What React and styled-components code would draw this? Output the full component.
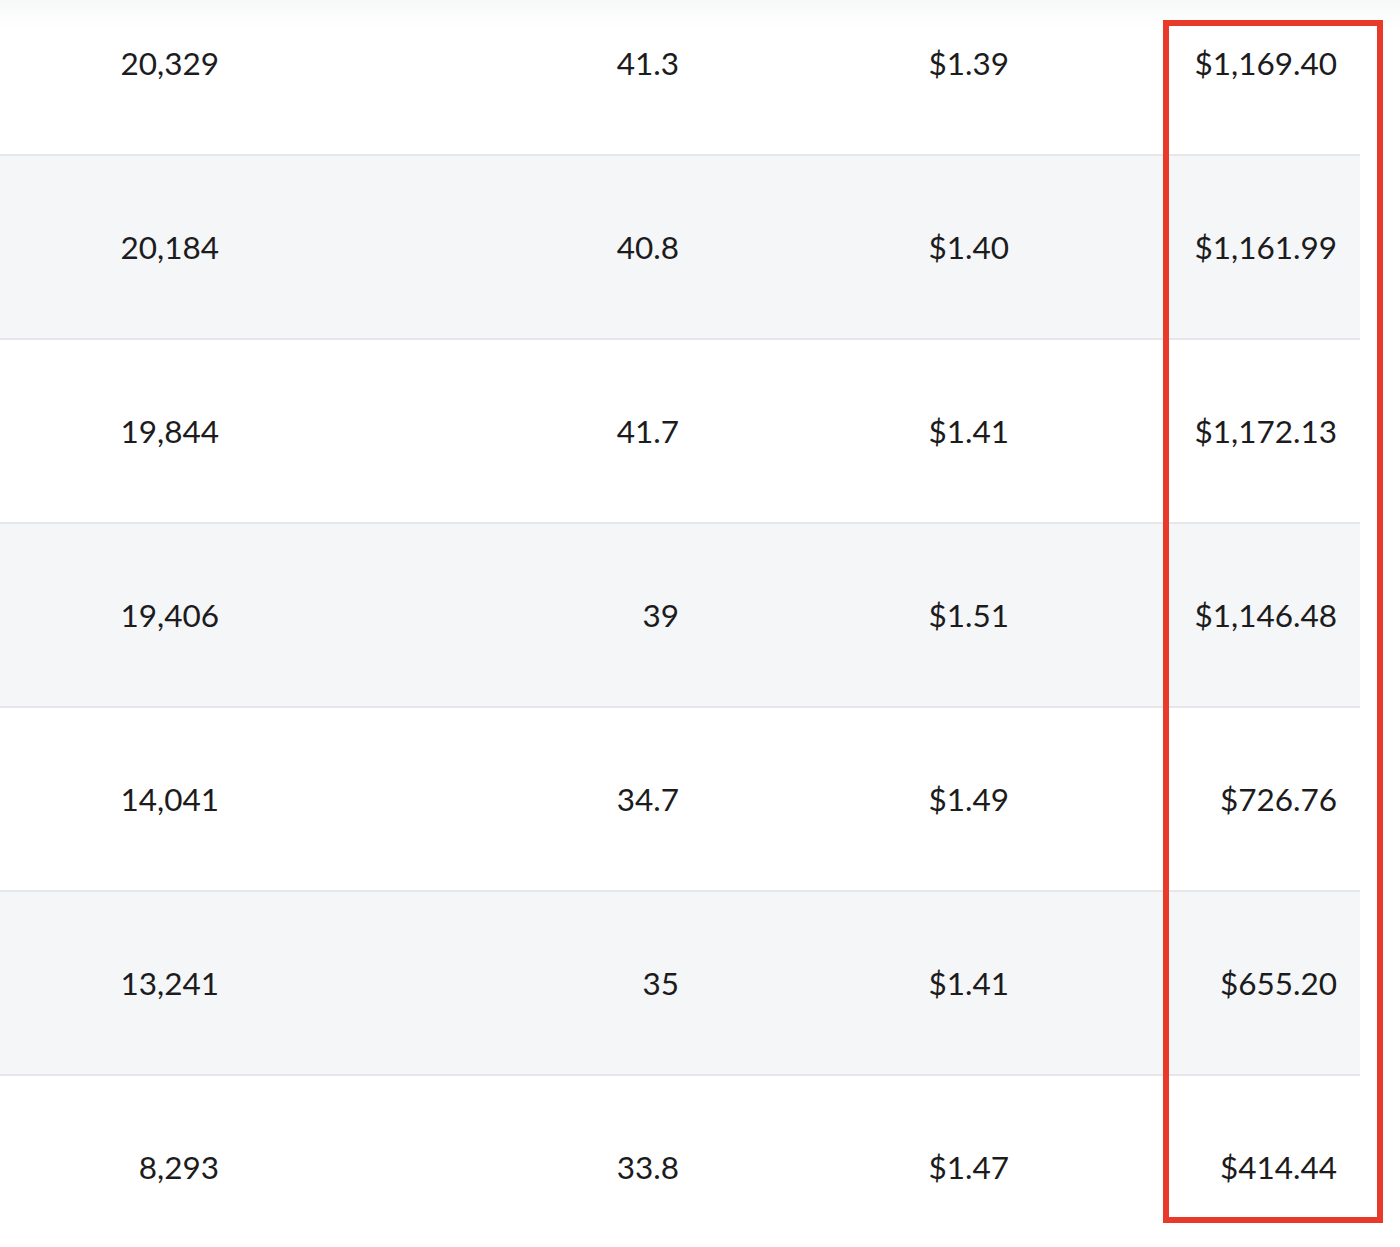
import React from "react";
import styled, { createGlobalStyle } from "styled-components";

const Global = createGlobalStyle`
  html, body { margin: 0; padding: 0; background: #ffffff; }
  body { font-family: "Lato", "Open Sans", sans-serif; }
`;

const Page = styled.div`
  position: relative;
  width: 1400px;
  height: 1247px;
  overflow: hidden;
  background: #ffffff;
  &::before {
    content: "";
    position: absolute;
    left: 0;
    top: 0;
    right: 0;
    height: 28px;
    background: linear-gradient(to bottom, #f7f8f8, rgba(255, 255, 255, 0));
    z-index: 1;
  }
`;

const Table = styled.div`
  width: 1360px;
  margin-top: -28px;
`;

const Row = styled.div`
  display: grid;
  grid-template-columns: 242px 460px 330px 328px;
  height: 184px;
  box-sizing: border-box;
  align-items: center;
  background: ${(p) => (p.$striped ? "#f5f6f8" : "#ffffff")};
  border-bottom: 2px solid #e6e7eb;
`;

const Cell = styled.div`
  text-align: right;
  padding-right: 23px;
  font-size: 31.5px;
  line-height: 40px;
  color: #1c1c1e;
  font-variant-numeric: tabular-nums;
`;

const Highlight = styled.div`
  position: absolute;
  left: 1163px;
  top: 20px;
  width: 220px;
  height: 1203px;
  box-sizing: border-box;
  border: 6px solid #e8392b;
  z-index: 2;
  pointer-events: none;
`;

const rows = [
  ["20,329", "41.3", "$1.39", "$1,169.40"],
  ["20,184", "40.8", "$1.40", "$1,161.99"],
  ["19,844", "41.7", "$1.41", "$1,172.13"],
  ["19,406", "39", "$1.51", "$1,146.48"],
  ["14,041", "34.7", "$1.49", "$726.76"],
  ["13,241", "35", "$1.41", "$655.20"],
  ["8,293", "33.8", "$1.47", "$414.44"],
];

export default function App() {
  return (
    <>
      <Global />
      <Page>
        <Table>
          {rows.map((r, i) => (
            <Row key={i} $striped={i % 2 === 1}>
              {r.map((c, j) => (
                <Cell key={j}>{c}</Cell>
              ))}
            </Row>
          ))}
        </Table>
        <Highlight />
      </Page>
    </>
  );
}
